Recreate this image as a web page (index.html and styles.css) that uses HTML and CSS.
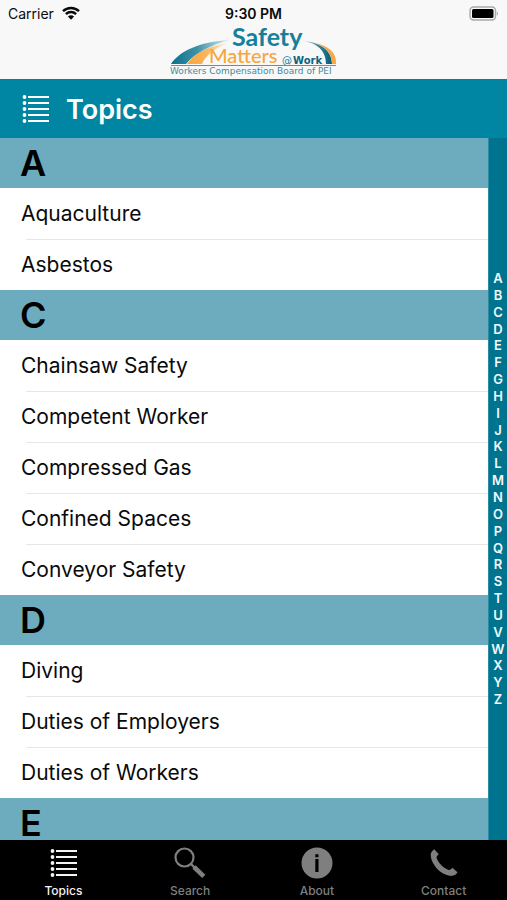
FILE: index.html
```html
<!DOCTYPE html>
<html lang="en">
<head>
<meta charset="utf-8">
<meta name="viewport" content="width=device-width, initial-scale=1">
<title>Topics</title>
<link rel="stylesheet" href="styles.css">
</head>
<body>
<svg class="defs" aria-hidden="true">
  <symbol id="icon-list" viewBox="0 0 28 30">
    <g fill="currentColor">
      <circle cx="2.500" cy="3" r="1.9"/><circle cx="2.500" cy="9" r="1.9"/><circle cx="2.500" cy="15" r="1.9"/><circle cx="2.500" cy="21" r="1.9"/><circle cx="2.500" cy="27" r="1.9"/>
      <rect x="6" y="2" width="21" height="2"/><rect x="6" y="8" width="21" height="2"/><rect x="6" y="14" width="21" height="2"/><rect x="6" y="20" width="21" height="2"/><rect x="6" y="26" width="21" height="2"/>
    </g>
  </symbol>
</svg>

<header class="top">
  <div class="status">
    <span class="carrier">Carrier
      <svg class="wifi" viewBox="0 0 18 14" aria-hidden="true">
        <g fill="none" stroke="#0a0a0a" stroke-width="2.5">
          <path d="M1 5.2A11.4 11.4 0 0 1 17 5.2"/>
          <path d="M3.9 8.2A7.3 7.3 0 0 1 14.1 8.2"/>
        </g>
        <path d="M9 13.8L5.9 10.6A4.5 4.5 0 0 1 12.1 10.6Z" fill="#0a0a0a"/>
      </svg>
    </span>
    <span class="time">9:30 PM</span>
    <svg class="battery" viewBox="0 0 30 15" aria-hidden="true">
      <rect x="1" y="1" width="25.5" height="13" rx="3.5" fill="#f8f8f8" stroke="#a9a9a9" stroke-width="1.4"/>
      <rect x="3" y="3" width="21.5" height="9" rx="1.5" fill="#000"/>
      <path d="M27.8 5.2Q30 7.5 27.8 9.8Z" fill="#a0a0a0"/>
    </svg>
  </div>
  <svg class="logo" viewBox="0 0 170 52" role="img" aria-label="Safety Matters @ Work">
    <defs>
      <linearGradient id="teal-left" x1="0" x2="1"><stop offset="0" stop-color="#07708c"/><stop offset=".45" stop-color="#3f93a8"/><stop offset="1" stop-color="#e4eff1"/></linearGradient>
      <linearGradient id="gold-left" x1="0" x2="1"><stop offset="0" stop-color="#f9a63c"/><stop offset=".5" stop-color="#f9b55f"/><stop offset="1" stop-color="#fbeedd"/></linearGradient>
      <linearGradient id="teal-right" x1="0" x2="1"><stop offset="0" stop-color="#b5d5db"/><stop offset=".5" stop-color="#3188a1"/><stop offset="1" stop-color="#075a76"/></linearGradient>
    </defs>
    <path d="M2 38C11 25 29 16 61 14C42 19 26 27 17 38Z" fill="url(#teal-left)"/>
    <path d="M18 38C24 29 36 21 58 17C45 23 37 29 33 38Z" fill="url(#gold-left)"/>
    <path d="M135 15C154 17 163 26 163 38H157C157 27 151 18 135 15Z" fill="url(#teal-right)"/>
    <path d="M146 17C160 20 168 27 167 38H163C163 28 157 21 146 17Z" fill="#f5a847"/>
    <text class="logo-safety" x="63" y="20">Safety</text>
    <text class="logo-matters" x="40" y="37">Matters</text>
    <text class="logo-at" x="113" y="38">@</text>
    <text class="logo-work" x="124" y="38">Work</text>
    <rect x="2" y="39" width="165" height="1" fill="#4a9bb0"/>
    <text class="logo-board" x="1" y="48">Workers Compensation Board of PEI</text>
  </svg>
</header>

<div class="titlebar">
  <svg class="list-icon" aria-hidden="true"><use href="#icon-list"/></svg>
  <h1>Topics</h1>
</div>

<div class="content">
  <main class="topics">
    <section>
      <h2 id="a">A</h2>
      <ul>
        <li><a href="#aquaculture">Aquaculture</a></li>
        <li><a href="#asbestos">Asbestos</a></li>
      </ul>
    </section>
    <section>
      <h2 id="c">C</h2>
      <ul>
        <li><a href="#chainsaw">Chainsaw Safety</a></li>
        <li><a href="#competent">Competent Worker</a></li>
        <li><a href="#gas">Compressed Gas</a></li>
        <li><a href="#confined">Confined Spaces</a></li>
        <li><a href="#conveyor">Conveyor Safety</a></li>
      </ul>
    </section>
    <section>
      <h2 id="d">D</h2>
      <ul>
        <li><a href="#diving">Diving</a></li>
        <li><a href="#employers">Duties of Employers</a></li>
        <li><a href="#workers">Duties of Workers</a></li>
      </ul>
    </section>
    <section>
      <h2 id="e">E</h2>
    </section>
  </main>
  <nav class="index">
    <a href="#a">A</a><a href="#b">B</a><a href="#c">C</a><a href="#d">D</a><a href="#e">E</a><a href="#f">F</a><a href="#g">G</a><a href="#h">H</a><a href="#i">I</a><a href="#j">J</a><a href="#k">K</a><a href="#l">L</a><a href="#m">M</a><a href="#n">N</a><a href="#o">O</a><a href="#p">P</a><a href="#q">Q</a><a href="#r">R</a><a href="#s">S</a><a href="#t">T</a><a href="#u">U</a><a href="#v">V</a><a href="#w">W</a><a href="#x">X</a><a href="#y">Y</a><a href="#z">Z</a>
  </nav>
</div>

<nav class="tabs">
  <button class="tab active" type="button">
    <svg viewBox="0 0 32 32" aria-hidden="true"><use href="#icon-list" x="3" y="1" width="28" height="30"/></svg>
    Topics
  </button>
  <button class="tab" type="button">
    <svg viewBox="0 0 32 32" aria-hidden="true">
      <circle cx="10.5" cy="10.5" r="9" fill="none" stroke="currentColor" stroke-width="2.2"/>
      <path d="M17 17L21 21" stroke="currentColor" stroke-width="2.4"/>
      <path d="M20 20L29.8 29.300" stroke="currentColor" stroke-width="4.600"/>
    </svg>
    Search
  </button>
  <button class="tab" type="button">
    <svg viewBox="0 0 32 32" aria-hidden="true">
      <circle cx="16" cy="16" r="15.5" fill="currentColor"/>
      <path d="M14.300 7.200h3.200v3h-3.200zM14.300 12h3.200v13h-3.200z" fill="#000"/>
    </svg>
    About
  </button>
  <button class="tab" type="button">
    <svg viewBox="0 0 32 32" aria-hidden="true">
      <path d="M6.300 2.200C3.500 4.200 2.200 6.200 2.800 9.500C4 18 12 27 21.500 28.800C25.500 29.300 28 28 29.500 25.300L24.300 20.800C23 22.500 21.800 23.500 20 22.800C15 20.800 10.500 16 8.700 11.300C8.300 9.800 9 8.600 10.800 7.300Z" fill="currentColor"/>
    </svg>
    Contact
  </button>
</nav>
</body>
</html>
```
FILE: styles.css
```css
* {
  box-sizing: border-box;
}

body {
  margin: 0;
  height: 100vh;
  display: flex;
  flex-direction: column;
  background: #fff;
  color: #0a0a0a;
  font-family: Inter, "Liberation Sans", sans-serif;
}

a {
  color: inherit;
  text-decoration: none;
}

.defs {
  display: none;
}

.top {
  display: flex;
  flex-direction: column;
  align-items: center;
  background: #f8f8f8;
  border-bottom: 1px solid #0a7d95;
}

.status {
  width: 100%;
  height: 26px;
  padding: 0 8px;
  display: grid;
  grid-template-columns: 1fr auto 1fr;
  align-items: center;
  font-size: 14px;
}

.carrier {
  display: flex;
  align-items: center;
  gap: 8px;
}

.wifi {
  width: 18px;
  height: 14px;
}

.time {
  font-weight: 600;
}

.battery {
  width: 30px;
  height: 15px;
  justify-self: end;
}

.logo {
  width: 170px;
  height: 52px;
  margin-bottom: 1px;
  overflow: visible;
}

.logo-safety,
.logo-matters {
  font-family: Lato, sans-serif;
}

.logo-safety {
  font-size: 25px;
  font-weight: 700;
  fill: #16809a;
}

.logo-matters {
  font-size: 20px;
  font-weight: 500;
  fill: #f7a63e;
}

.logo-at,
.logo-work,
.logo-board {
  font-family: "DejaVu Sans", sans-serif;
}

.logo-at {
  font-size: 10px;
  fill: #16809a;
}

.logo-work {
  font-size: 10px;
  font-weight: 700;
  fill: #0b6480;
}

.logo-board {
  font-size: 9px;
  fill: #3d8ba0;
}

.titlebar {
  height: 58px;
  padding: 0 22px;
  display: flex;
  align-items: center;
  gap: 16px;
  background: #0086a2;
  color: #fff;
}

.list-icon {
  width: 28px;
  height: 30px;
}

h1 {
  margin: 0;
  font-size: 27px;
  font-weight: 600;
}

.content {
  flex: 1;
  min-height: 0;
  display: flex;
}

.topics {
  flex: 1;
  overflow-y: auto;
  scrollbar-width: none;
}

h2 {
  margin: 0;
  height: 50px;
  padding: 0 20px;
  background: #6cacbe;
  color: #000;
  font-size: 36px;
  font-weight: 600;
  line-height: 50px;
}

ul {
  margin: 0;
  padding: 0;
  list-style: none;
}

li a {
  display: block;
  padding-left: 21px;
  font-size: 21px;
  line-height: 51px;
}

li + li::before {
  content: "";
  display: block;
  height: 1px;
  margin: 0 0 -1px 26px;
  background: #e6e6e6;
}

.index {
  width: 19px;
  padding: 132px 0;
  display: flex;
  flex-direction: column;
  background: #00738f;
  border-left: 1px solid #2a8ba3;
  color: #f0fafc;
  font-size: 13px;
  font-weight: 600;
  text-align: center;
}

.index a {
  flex: 1;
  min-height: 0;
  line-height: 17px;
}

.tabs {
  height: 60px;
  display: flex;
  background: #000;
}

.tab {
  flex: 1;
  padding: 7px 0 0;
  display: flex;
  flex-direction: column;
  align-items: center;
  gap: 4px;
  border: 0;
  background: none;
  color: #7f7f7f;
  font-family: inherit;
  font-size: 12px;
  font-weight: 500;
  line-height: 16px;
}

.tab svg {
  width: 32px;
  height: 32px;
}

.active {
  color: #f4f4f4;
}
```
